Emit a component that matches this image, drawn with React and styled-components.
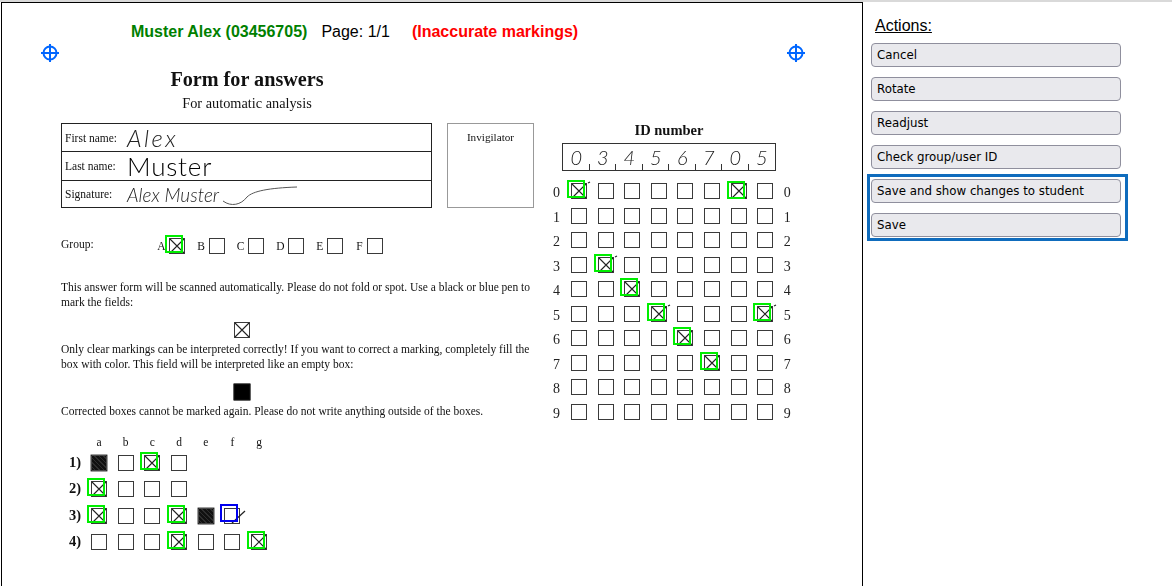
import React from "react";
import styled, { createGlobalStyle } from "styled-components";

const Global = createGlobalStyle`
  html, body { margin: 0; padding: 0; background: #fff; overflow: hidden; }
  #root { width: 1172px; height: 586px; overflow: hidden; }
`;
const Page = styled.div`
  display: flex; align-items: flex-start; height: 586px; box-sizing: border-box;
  border-top: 2px solid #d9d9d9; overflow: hidden;
`;
const Sheet = styled.main`
  position: relative; width: 862px; height: 640px; flex: none; box-sizing: border-box;
  border: 1px solid #000; margin-left: 1px; overflow: hidden;
`;
const Header = styled.header`
  display: flex; height: 56px; padding: 20px 0 0 129px; box-sizing: border-box;
  font: 16px/18px "Liberation Sans", Arial, sans-serif; color: #000;
`;
const Student = styled.b`color: #008000; margin-right: 14px;`;
const PageNo = styled.span`margin-right: 22px;`;
const Warning = styled.b`color: #f00;`;
const Target = styled.svg`
  position: absolute; top: 41px; left: ${p => p.$x}px; width: 18px; height: 18px;
`;
const FormBody = styled.div`
  display: flex; padding-left: 59px; color: #111;
  font-family: "Liberation Serif", "Times New Roman", serif;
`;
const LeftCol = styled.section`width: 473px; flex: none; margin-right: 12px; padding-top: 8px;`;
const Title = styled.h1`
  margin: 0; width: 372px; text-align: center; font-size: 20.2px; line-height: 24px;
  font-weight: 700; filter: blur(.3px);
`;
const Subtitle = styled.p`
  margin: 3px 0 11px; width: 372px; text-align: center; font-size: 14.3px; line-height: 18px; filter: blur(.3px);
`;
const TopRow = styled.div`display: flex; gap: 15px; height: 85px;`;
const NameTable = styled.div`
  width: 371px; box-sizing: border-box; border: 1px solid #222; display: grid;
  grid-template-rows: 27px 29px 27px; filter: blur(.25px);
`;
const NameRow = styled.div`
  display: flex; align-items: center; padding-left: 3px; position: relative;
  & + & { border-top: 1px solid #222; }
`;
const NameLabel = styled.span`font-size: 11.5px; width: 62px; flex: none;`;
const Hand = styled.span`
  font-family: "Lato", "Open Sans", sans-serif; font-weight: 300; color: ${p => p.$dark ? "#000" : "#222"};
  font-size: ${p => p.$size}px; letter-spacing: ${p => p.$spacing || 0}px; font-style: ${p => p.$italic ? "italic" : "normal"};
  line-height: 1;
`;
const Swash = styled.svg`width: 90px; height: 26px; margin-left: 2px; flex: none;`;
const Invigilator = styled.div`
  width: 87px; box-sizing: border-box; border: 1px solid #999; text-align: center;
  font-size: 11.2px; padding-top: 7px; filter: blur(.25px);
`;
const GroupRow = styled.div`display: flex; align-items: center; height: 15px; margin-top: 30px; font-size: 11.5px;`;
const GroupLabel = styled.span`width: 96px; flex: none; margin-top: -3px; filter: blur(.25px);`;
const GroupItem = styled.div`
  width: 39.6px; flex: none; display: flex; align-items: center; gap: 3px;
`;
const GroupLetter = styled.span`width: 9px; text-align: center; filter: blur(.25px); font-size: 11.5px;`;
const Para = styled.p`
  margin: ${p => p.$top}px 0 0; font-size: 11.5px; line-height: 14.5px; white-space: nowrap; filter: blur(.25px);
`;
const Sample = styled.div`display: flex; margin: 13px 0 0 173px;`;
const Answers = styled.div`
  display: grid; margin-top: 17px;
  grid-template-columns: 30px repeat(7, 26.7px);
  grid-template-rows: 19px repeat(4, 26.6px);
`;
const ColHead = styled.div`
  font-size: 11.5px; line-height: 12px; width: 16px; text-align: center; filter: blur(.25px);
`;
const RowNo = styled.div`font-size: 14.5px; font-weight: 700; line-height: 15px; padding-left: 8px; filter: blur(.2px);`;
const HeadRow = styled.div`display: contents;`;
const RightCol = styled.section`width: 260px; flex: none; margin-left: 1px; padding-top: 63px;`;
const IdTitle = styled.h2`
  margin: 0 0 5px 15px; width: 214px; text-align: center; font-size: 14.5px; line-height: 16px;
  font-weight: 700; filter: blur(.25px);
`;
const IdBox = styled.div`
  display: flex; width: 214px; height: 28px; margin-left: 15px; box-sizing: border-box;
  border: 1px solid #333; filter: blur(.25px);
`;
const IdCell = styled.div`
  flex: 1; position: relative; display: flex; align-items: center; justify-content: center;
  &:not(:last-child)::after {
    content: ""; position: absolute; right: 0; bottom: 0; width: 1px; height: 6px; background: #333;
  }
`;
const IdGrid = styled.div`
  display: grid; margin-top: 12px;
  grid-template-columns: 24px repeat(8, 26.6px) 20px;
  grid-auto-rows: 24.5px;
`;
const Digit = styled.div`
  font-size: 14px; line-height: 15px; filter: blur(.25px); color: #222;
  text-align: ${p => p.$right ? "left" : "center"};
  padding-right: ${p => p.$right ? 0 : 5}px; padding-top: 2px;
`;
const Cell = styled.div`position: relative; width: 16px; height: 16px;`;
const fills = {
  scribble: "repeating-linear-gradient(45deg,#111 0 2px,#2e2e2e 2px 3px)",
  solid: "#000",
};
const BoxFrame = styled.div`
  width: 16px; height: 16px; box-sizing: border-box; border: 1px solid #3a3a3a; filter: blur(.3px);
  background: ${p => fills[p.$fill] || "transparent"};
  ${p => p.$fill ? "border-color:#111; transform: scale(1.05);" : ""}
`;
const Cross = styled.svg`position: absolute; inset: 0; width: 16px; height: 16px; overflow: visible; filter: blur(.2px);`;
const Mark = styled.div`
  position: absolute; box-sizing: border-box; width: 18px; height: 18px;
  left: ${p => p.$dx}px; top: ${p => p.$dy}px;
  border: 2px solid ${p => p.$blue ? "#0000ee" : "#00ee00"};
`;
const Side = styled.aside`padding: 15px 0 0 8px; width: 270px; flex: none;`;
const ActionsTitle = styled.div`
  font: 16px/18px "Liberation Sans", Arial, sans-serif; text-decoration: underline; margin: 0 0 8px 4px; color: #000;
`;
const ActionButton = styled.button`
  display: block; width: 250px; height: 24px; box-sizing: border-box; padding: 0 5px;
  margin: 0 0 10px; text-align: left; color: #000; cursor: pointer;
  background: #e9e9ed; border: 1px solid #8f8f9d; border-radius: 4px;
  font: 11.8px/22px "DejaVu Sans", Verdana, sans-serif;
`;
const Highlight = styled.div`
  box-sizing: border-box; width: 261px; height: 67px; margin: -5px 0 0 -4px; padding: 2px 0 0 1px;
  border: 3px solid #0f6cbd;
  & button:last-child { margin-bottom: 0; }
`;

const TargetIcon = ({ x }) => (
  <Target $x={x} viewBox="0 0 18 18" fill="none" stroke="#0066ff" strokeWidth="2">
    <circle cx="9" cy="9" r="6.5" />
    <path d="M9 0v18M0 9h18" />
  </Target>
);

const Box = ({ x, fill, mark, blue, dx = -4, dy = -3, stray }) => (
  <Cell>
    <BoxFrame $fill={fill} />
    {x && (
      <Cross viewBox="0 0 16 16" fill="none" stroke="#222" strokeWidth="1.1">
        <path d="M1 1 15 15M15 1 1 15" />
        {stray && <path d="M17 0l2-1" />}
      </Cross>
    )}
    {blue && (
      <Cross viewBox="0 0 16 16" fill="none" stroke="#222" strokeWidth="1.2">
        <path d="M8 15 21 3" />
      </Cross>
    )}
    {(mark || blue) && <Mark $blue={blue} $dx={dx} $dy={dy} />}
  </Cell>
);

const idMarks = {
  "0-0": { stray: true }, "0-6": { dy: -2 },
  "3-1": { stray: true }, "4-2": {},
  "5-3": { stray: true }, "5-7": { stray: true },
  "6-4": {}, "7-5": {},
};
const answers = [
  { no: "1)", cells: [{ fill: "scribble" }, {}, { x: true, mark: true }, {}] },
  { no: "2)", cells: [{ x: true, mark: true }, {}, {}, {}] },
  { no: "3)", cells: [{ x: true, mark: true }, {}, {}, { x: true, mark: true }, { fill: "scribble" }, { blue: true, dy: -4 }] },
  { no: "4)", cells: [{}, {}, {}, { x: true, mark: true }, {}, {}, { x: true, mark: true }] },
];
const groups = ["A", "B", "C", "D", "E", "F"];
const actions = ["Cancel", "Rotate", "Readjust", "Check group/user ID"];

export default function App() {
  return (
    <Page>
      <Global />
      <Sheet>
        <Header>
          <Student>Muster Alex (03456705)</Student>
          <PageNo>Page: 1/1</PageNo>
          <Warning>(Inaccurate markings)</Warning>
        </Header>
        <TargetIcon x={39} />
        <TargetIcon x={785} />
        <FormBody>
          <LeftCol>
            <Title>Form for answers</Title>
            <Subtitle>For automatic analysis</Subtitle>
            <TopRow>
              <NameTable>
                <NameRow><NameLabel>First name:</NameLabel><Hand $size={24} $spacing={2.5} $italic>Alex</Hand></NameRow>
                <NameRow><NameLabel>Last name:</NameLabel><Hand $size={26} $spacing={.8} $dark>Muster</Hand></NameRow>
                <NameRow>
                  <NameLabel>Signature:</NameLabel>
                  <Hand $size={19} $italic>Alex Muster</Hand>
                  <Swash viewBox="0 0 90 26" fill="none" stroke="#555" strokeWidth="1">
                    <path d="M2 20c8 6 18 4 24-4 6-6 22-9 50-10" />
                  </Swash>
                </NameRow>
              </NameTable>
              <Invigilator>Invigilator</Invigilator>
            </TopRow>
            <GroupRow>
              <GroupLabel>Group:</GroupLabel>
              {groups.map((g, i) => (
                <GroupItem key={g}>
                  <GroupLetter>{g}</GroupLetter>
                  <Box x={i === 0} mark={i === 0} />
                </GroupItem>
              ))}
            </GroupRow>
            <Para $top={27}>
              This answer form will be scanned automatically. Please do not fold or spot. Use a black or blue pen to<br />
              mark the fields:
            </Para>
            <Sample><Box x /></Sample>
            <Para $top={4}>
              Only clear markings can be interpreted correctly! If you want to correct a marking, completely fill the<br />
              box with color. This field will be interpreted like an empty box:
            </Para>
            <Sample><Box fill="solid" /></Sample>
            <Para $top={4}>Corrected boxes cannot be marked again. Please do not write anything outside of the boxes.</Para>
            <Answers>
              <HeadRow>
                <div />
                {["a", "b", "c", "d", "e", "f", "g"].map(l => <ColHead key={l}>{l}</ColHead>)}
              </HeadRow>
              {answers.map(row => (
                <HeadRow key={row.no}>
                  <RowNo>{row.no}</RowNo>
                  {Array.from({ length: 7 }, (_, i) => {
                    const c = row.cells[i];
                    return c ? <Box key={i} {...c} /> : <div key={i} />;
                  })}
                </HeadRow>
              ))}
            </Answers>
          </LeftCol>
          <RightCol>
            <IdTitle>ID number</IdTitle>
            <IdBox>
              {["0", "3", "4", "5", "6", "7", "0", "5"].map((d, i) => (
                <IdCell key={i}><Hand $size={20} $italic>{d}</Hand></IdCell>
              ))}
            </IdBox>
            <IdGrid>
              {Array.from({ length: 10 }, (_, r) => (
                <HeadRow key={r}>
                  <Digit>{r}</Digit>
                  {Array.from({ length: 8 }, (_, c) => {
                    const m = idMarks[`${r}-${c}`];
                    return <Box key={c} x={!!m} mark={!!m} {...(m || {})} />;
                  })}
                  <Digit $right>{r}</Digit>
                </HeadRow>
              ))}
            </IdGrid>
          </RightCol>
        </FormBody>
      </Sheet>
      <Side>
        <ActionsTitle>Actions:</ActionsTitle>
        {actions.map(a => <ActionButton key={a}>{a}</ActionButton>)}
        <Highlight>
          <ActionButton>Save and show changes to student</ActionButton>
          <ActionButton>Save</ActionButton>
        </Highlight>
      </Side>
    </Page>
  );
}
